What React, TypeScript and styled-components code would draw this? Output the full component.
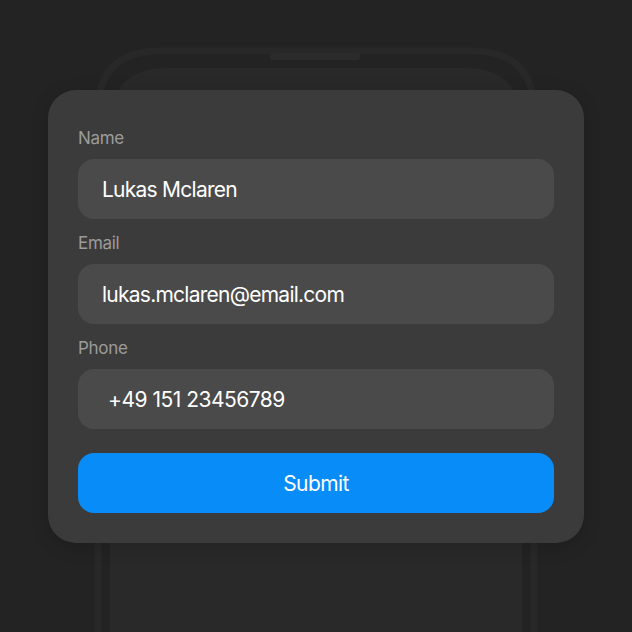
import styled, { createGlobalStyle } from "styled-components";

const GlobalStyle = createGlobalStyle`
  html, body {
    margin: 0;
    padding: 0;
    background: #232323;
  }
`;

const fields = [
  { label: "Name", value: "Lukas Mclaren", indent: 0, tracking: -0.75 },
  { label: "Email", value: "lukas.mclaren@email.com", indent: 0, tracking: -0.75 },
  { label: "Phone", value: "+49 151 23456789", indent: 6, tracking: -0.5 },
];

function PhoneOutline() {
  return (
    <PhoneSvg width="632" height="632" viewBox="0 0 632 632">
      <path
        d="M98 700 V112 Q98 51 160 51 H472 Q534 51 534 112 V700"
        fill="none"
        stroke="#282828"
        strokeWidth="7"
      />
      <path
        d="M110 700 V126 Q110 68 168 68 H464 Q522 68 522 126 V700 Z"
        fill="#292929"
      />
      <rect x="270" y="53" width="90" height="7" rx="3" fill="#2b2b2b" />
    </PhoneSvg>
  );
}

export default function App() {
  return (
    <>
      <GlobalStyle />
      <Stage>
        <PhoneOutline />
        <Card>
          {fields.map((field) => (
            <Field key={field.label}>
              <Label>{field.label}</Label>
              <Input $indent={field.indent} $tracking={field.tracking}>
                {field.value}
              </Input>
            </Field>
          ))}
          <SubmitButton>Submit</SubmitButton>
        </Card>
      </Stage>
    </>
  );
}

const Stage = styled.div`
  position: relative;
  width: 632px;
  height: 632px;
  overflow: hidden;
  background: #232323;
  padding: 90px 48px 0;
  box-sizing: border-box;
  font-family: "Inter", "Liberation Sans", sans-serif;
`;

const PhoneSvg = styled.svg`
  position: absolute;
  left: 0;
  top: 0;
`;

const Card = styled.div`
  position: relative;
  display: flex;
  flex-direction: column;
  gap: 13px;
  width: 536px;
  box-sizing: border-box;
  padding: 37px 30px 30px;
  border-radius: 28px;
  background: #3b3b3b;
  box-shadow: 0 4px 18px rgba(0, 0, 0, 0.15);
`;

const Field = styled.div`
  display: flex;
  flex-direction: column;
  gap: 10px;
`;

const Label = styled.div`
  font-size: 17px;
  line-height: 22px;
  color: #9c9c9c;
  letter-spacing: -0.3px;
`;

const Input = styled.div<{ $indent: number; $tracking: number }>`
  height: 60px;
  display: flex;
  align-items: center;
  padding-left: ${(p) => 24 + p.$indent}px;
  border-radius: 16px;
  background: #4a4a4a;
  color: #ffffff;
  font-size: 21px;
  letter-spacing: ${(p) => p.$tracking}px;
`;

const SubmitButton = styled.button`
  margin-top: 11px;
  height: 60px;
  border: none;
  border-radius: 16px;
  background: #088cf8;
  color: #ffffff;
  font-family: inherit;
  font-size: 21px;
  letter-spacing: -0.6px;
`;
